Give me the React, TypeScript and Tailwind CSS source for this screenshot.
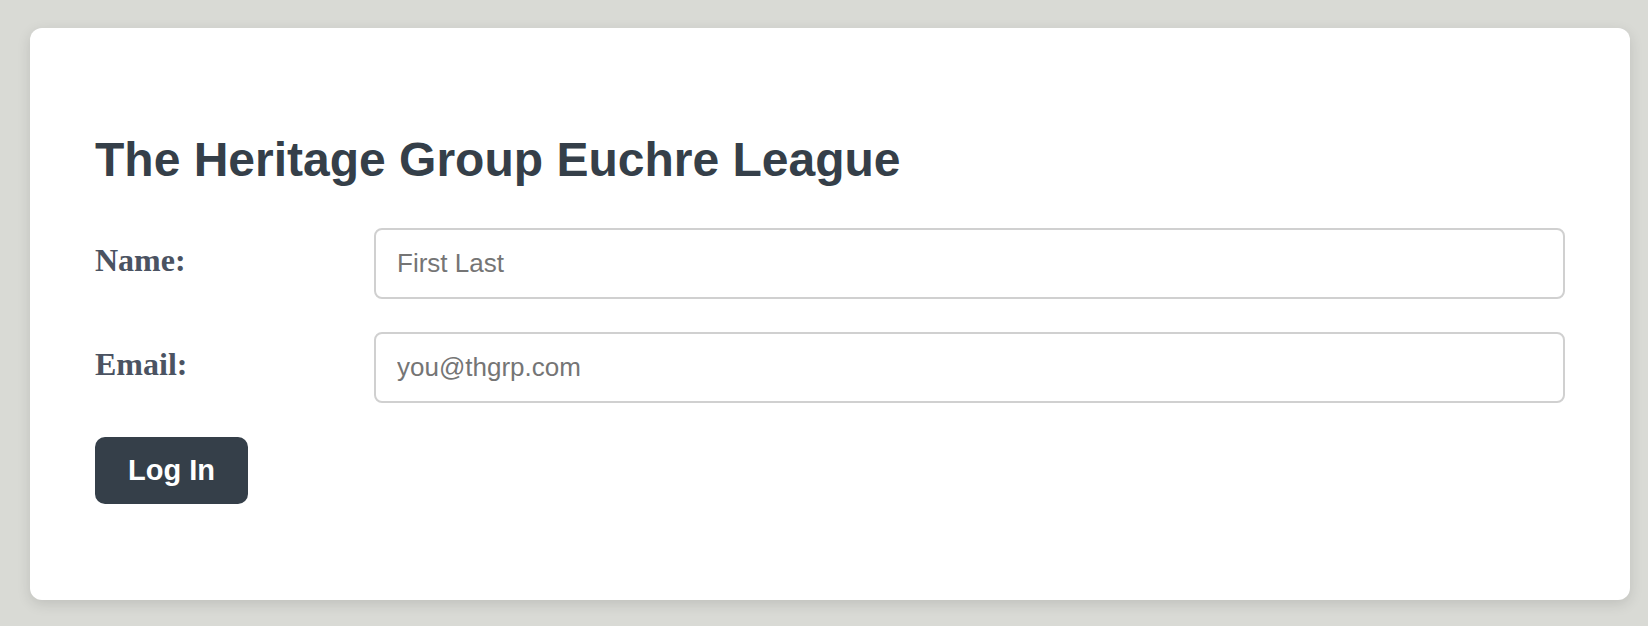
import React from 'react';

const sans = '[font-family:"Liberation_Sans",Arial,sans-serif]';

const Field: React.FC<{ label: string; placeholder: string; type?: string }> = ({ label, placeholder, type = 'text' }) => (
  <div className="flex items-start">
    <label className="w-[279px] shrink-0 mt-[12px] text-[32px] leading-[40px] font-bold text-[#4b5362] [font-family:'Liberation_Serif','Times_New_Roman',serif]">
      {label}
    </label>
    <input
      type={type}
      placeholder={placeholder}
      className={`h-[71px] w-full rounded-[8px] border-2 border-[#d0d0d0] bg-white px-[21px] text-[26px] text-[#333] placeholder:text-[#757575] outline-none ${sans}`}
    />
  </div>
);

export default function App() {
  return (
    <div className="min-h-screen bg-[#d9dad5] pt-[28px] pl-[30px]">
      <div className="w-[1600px] rounded-[12px] bg-white px-[65px] pt-[103px] pb-[96px] shadow-[0_4px_14px_rgba(0,0,0,0.12)]">
        <h1 className={`text-[48px] leading-[58px] font-bold text-[#353f49] ${sans}`}>
          The Heritage Group Euchre League
        </h1>

        <form className="mt-[39px] flex flex-col" onSubmit={(e) => e.preventDefault()}>
          <Field label="Name:" placeholder="First Last" />
          <div className="mt-[33px]">
            <Field label="Email:" placeholder="you@thgrp.com" type="email" />
          </div>
          <div className="mt-[34px]">
            <button
              type="submit"
              className={`flex h-[67px] items-center justify-center rounded-[10px] bg-[#353f49] px-[33px] text-[29px] font-bold text-white ${sans}`}
            >
              Log In
            </button>
          </div>
        </form>
      </div>
    </div>
  );
}
